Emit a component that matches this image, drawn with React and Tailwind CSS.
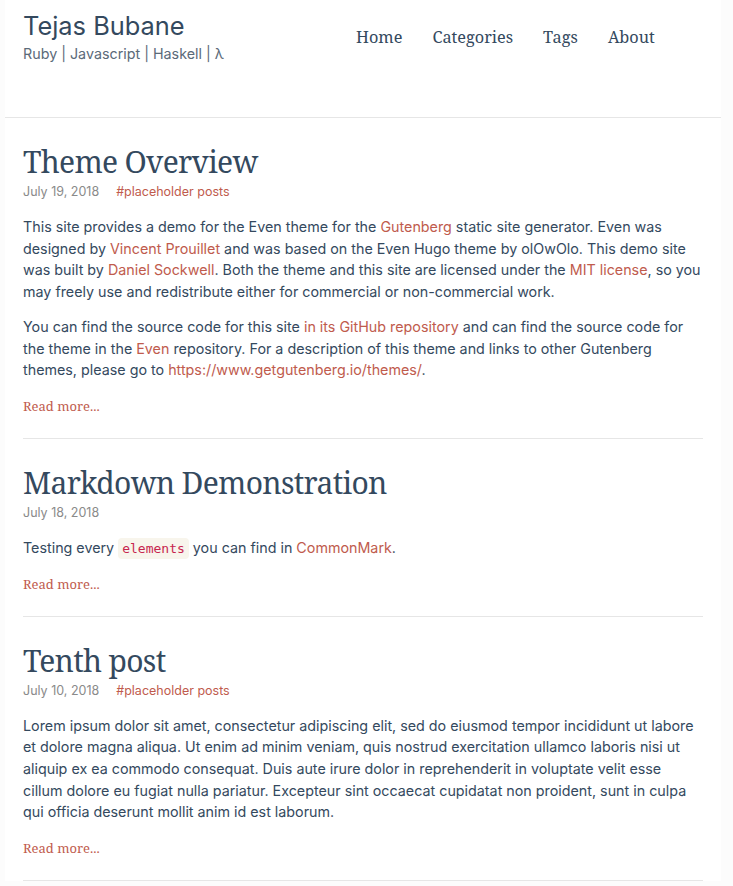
import React from 'react';

const serif = { fontFamily: '"Noto Serif", "DejaVu Serif", serif' };

const A = ({ children }) => <a className="text-[#c05b4d]">{children}</a>;

const posts = [
  {
    title: 'Theme Overview',
    date: 'July 19, 2018',
    tag: '#placeholder posts',
    body: [
      <>
        This site provides a demo for the Even theme for the <A>Gutenberg</A> static site generator. Even was
        designed by <A>Vincent Prouillet</A> and was based on the Even Hugo theme by olOwOlo. This demo site
        was built by <A>Daniel Sockwell</A>. Both the theme and this site are licensed under the <A>MIT license</A>, so you
        may freely use and redistribute either for commercial or non-commercial work.
      </>,
      <>
        You can find the source code for this site <A>in its GitHub repository</A> and can find the source code for
        the theme in the <A>Even</A> repository. For a description of this theme and links to other Gutenberg
        themes, please go to <A>https://www.getgutenberg.io/themes/</A>.
      </>,
    ],
  },
  {
    title: 'Markdown Demonstration',
    date: 'July 18, 2018',
    body: [
      <>
        Testing every{' '}
        <code className="rounded-[4px] bg-[#f8f5ec] px-[4px] py-[3px] align-baseline font-['DejaVu_Sans_Mono',monospace] text-[13px] leading-none text-[#c7254e]">
          elements
        </code>{' '}
        you can find in <A>CommonMark</A>.
      </>,
    ],
  },
  {
    title: 'Tenth post',
    date: 'July 10, 2018',
    tag: '#placeholder posts',
    body: [
      <>
        Lorem ipsum dolor sit amet, consectetur adipiscing elit, sed do eiusmod tempor incididunt ut labore
        et dolore magna aliqua. Ut enim ad minim veniam, quis nostrud exercitation ullamco laboris nisi ut
        aliquip ex ea commodo consequat. Duis aute irure dolor in reprehenderit in voluptate velit esse
        cillum dolore eu fugiat nulla pariatur. Excepteur sint occaecat cupidatat non proident, sunt in culpa
        qui officia deserunt mollit anim id est laborum.
      </>,
    ],
  },
];

const Post = ({ post }) => (
  <article className="border-b border-[#e6e6e6] pt-[24px] pb-[22px]">
    <h1 className="text-[30px] leading-[40px] font-normal tracking-[-0.7px] text-[#34495e]" style={serif}>
      {post.title}
    </h1>
    <div className="flex gap-[17px] text-[12.5px] leading-[20px]">
      <span className="text-[#8a8a8a]">{post.date}</span>
      {post.tag && <span className="text-[#c05b4d]">{post.tag}</span>}
    </div>
    <div className="mt-[14px] flex flex-col gap-[13px]">
      {post.body.map((p, i) => (
        <p key={i} className="text-[14.3px] leading-[21.7px]">
          {p}
        </p>
      ))}
    </div>
    <div className="mt-[15px] text-[13px] leading-[20px] text-[#c05b4d]" style={serif}>
      Read more...
    </div>
  </article>
);

export default function App() {
  return (
    <div className="min-h-screen bg-[#fcfcfc] font-['Inter',sans-serif] text-[#34495e]">
      <div className="ml-[5px] w-[716px] bg-white">
        <header className="flex h-[118px] border-b border-[#e6e6e6] px-[18px] pt-[10px]">
          <div className="w-[333px]">
            <div className="text-[25.4px] leading-[32px] text-[#34495e]">Tejas Bubane</div>
            <div className="mt-[2px] text-[14.3px] leading-[20px] text-[#5b6a79]">
              Ruby | Javascript | Haskell | λ
            </div>
          </div>
          <nav className="flex gap-[30px] pt-[14px] text-[16.3px] leading-[26px] text-[#34495e]" style={serif}>
            <a>Home</a>
            <a>Categories</a>
            <a>Tags</a>
            <a>About</a>
          </nav>
        </header>
        <main className="px-[18px]">
          {posts.map((p) => (
            <Post key={p.title} post={p} />
          ))}
        </main>
      </div>
    </div>
  );
}
